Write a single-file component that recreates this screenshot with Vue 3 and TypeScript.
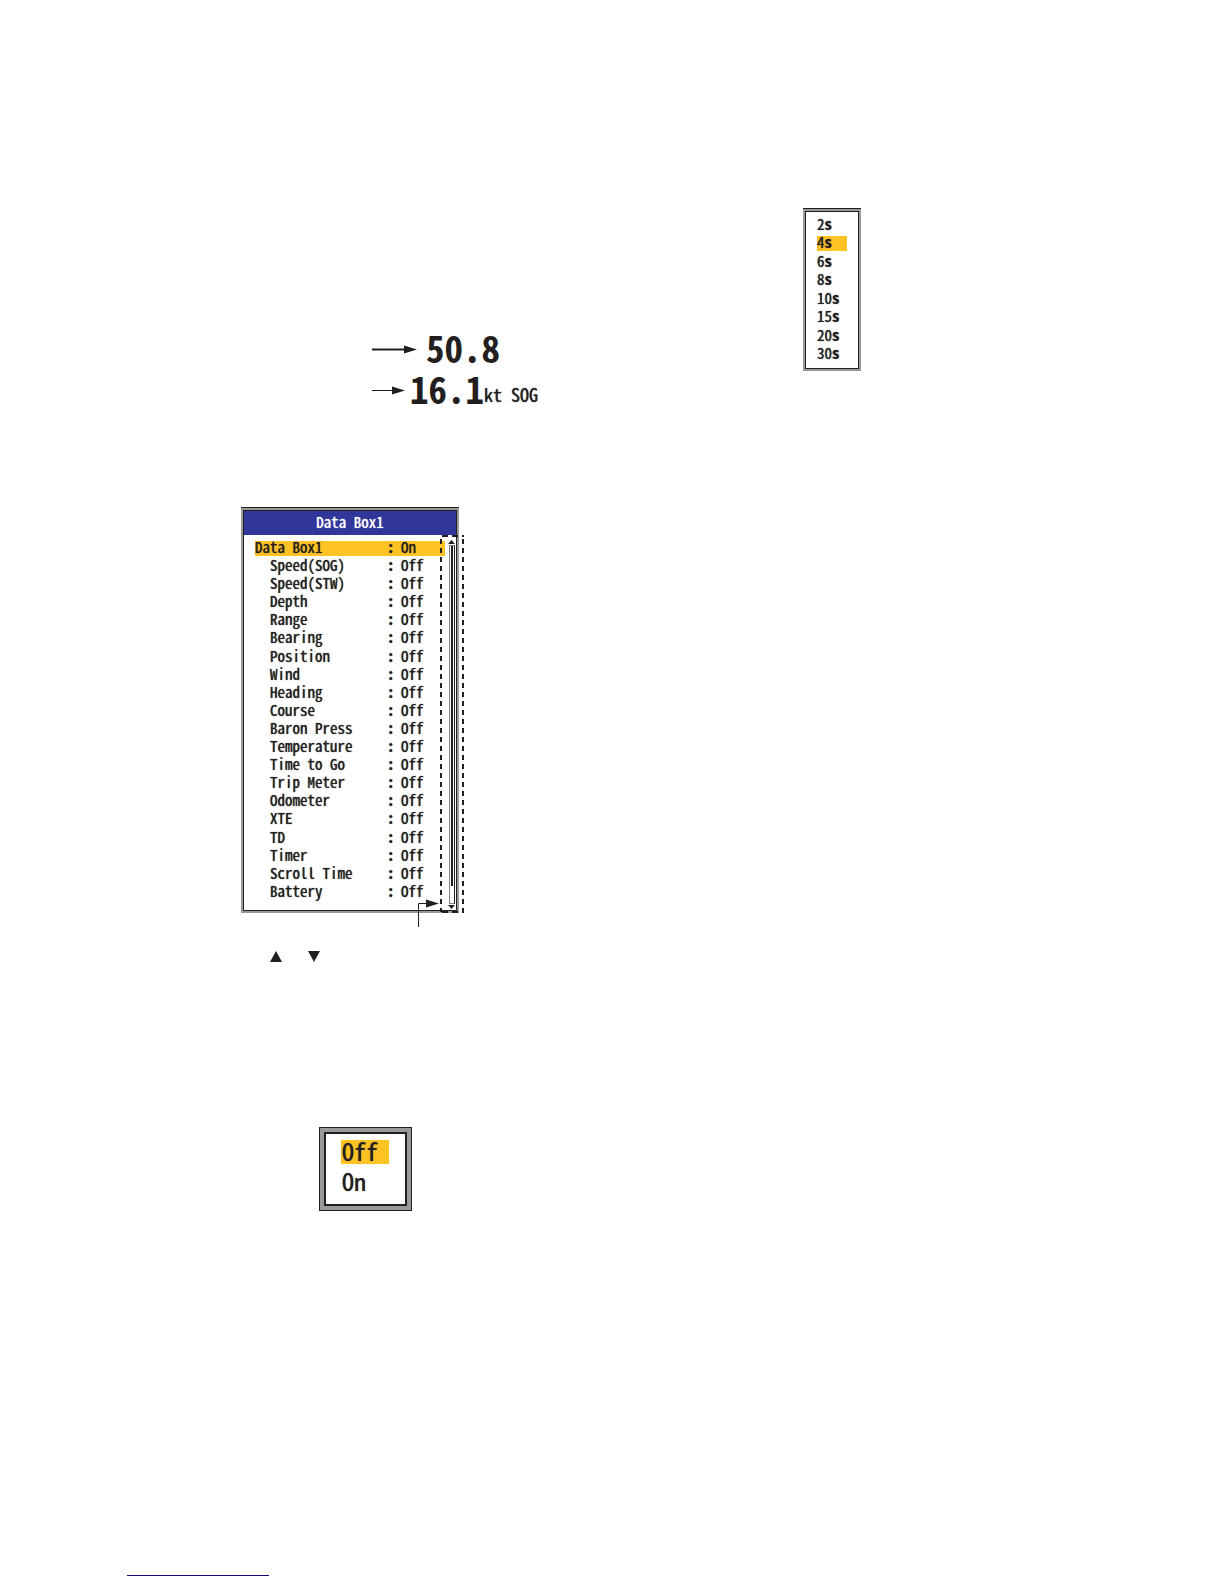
<script setup lang="ts">
import { ref } from 'vue'

interface Item {
  label: string
  value: string
}

const intervals: string[] = ['2s', '4s', '6s', '8s', '10s', '15s', '20s', '30s']
const chosenInterval = ref('4s')

const names: string[] = [
  'Speed(SOG)', 'Speed(STW)', 'Depth', 'Range', 'Bearing', 'Position', 'Wind',
  'Heading', 'Course', 'Baron Press', 'Temperature', 'Time to Go', 'Trip Meter',
  'Odometer', 'XTE', 'TD', 'Timer', 'Scroll Time', 'Battery',
]
const items: Item[] = [
  { label: 'Data Box1', value: 'On' },
  ...names.map((label) => ({ label, value: 'Off' })),
]
const chosenItem = ref('Data Box1')

const states: string[] = ['Off', 'On']
const chosenState = ref('Off')
</script>

<template>
  <main class="page">
    <div class="columns">
      <section class="left">
        <div class="readout">
          <div class="reading">
            <svg class="arrow" width="45" height="9" viewBox="0 0 45 9" aria-hidden="true">
              <path d="M0 4.5H34" stroke="#231f20" stroke-width="2" />
              <path d="M32 0.5L45 4.5L32 8.5Z" fill="#231f20" />
            </svg>
            <span class="big">50.8</span>
          </div>
          <div class="reading near">
            <svg class="arrow" width="33" height="9" viewBox="0 0 33 9" aria-hidden="true">
              <path d="M0 4.5H22" stroke="#231f20" />
              <path d="M20 0.5L33 4.5L20 8.5Z" fill="#231f20" />
            </svg>
            <span class="big">16.1</span><span class="unit">kt SOG</span>
          </div>
        </div>

        <div class="panel frame">
          <h2 class="title">Data Box1</h2>
          <div class="body">
            <ul class="items">
              <li v-for="item in items" :key="item.label">
                <button
                  type="button"
                  class="item"
                  :class="{ chosen: item.label === chosenItem, sub: item.label !== 'Data Box1' }"
                  @click="chosenItem = item.label"
                >
                  <span class="name">{{ item.label }}</span>
                  <span class="colon">:</span>
                  <span>{{ item.value }}</span>
                </button>
              </li>
            </ul>
            <div class="scroll">
              <svg width="7" height="4" viewBox="0 0 7 4" aria-hidden="true"><path d="M0 4L3.5 0L7 4Z" fill="#231f20" /></svg>
              <div class="track"><div class="thumb"></div></div>
              <svg width="7" height="4" viewBox="0 0 7 4" aria-hidden="true"><path d="M0 0L3.5 4L7 0Z" fill="#231f20" /></svg>
            </div>
          </div>
          <svg class="outline" width="24" height="378" viewBox="0 0 24 378" aria-hidden="true">
            <path d="M2 1H24M2 377H24" fill="none" stroke="#231f20" stroke-width="2" stroke-dasharray="6 4" />
            <path d="M1 4V377M23 4V377" fill="none" stroke="#231f20" stroke-width="2" stroke-dasharray="5 4" />
          </svg>
          <svg class="pointer" width="21" height="28" viewBox="0 0 21 28" aria-hidden="true">
            <path d="M0.5 28V4.5H10" fill="none" stroke="#231f20" />
            <path d="M8 0.5L21 4.5L8 8.5Z" fill="#231f20" />
          </svg>
        </div>

        <div class="keys">
          <svg width="12" height="11" viewBox="0 0 12 11" aria-hidden="true"><path d="M0 11L6 0L12 11Z" fill="#231f20" /></svg>
          <svg width="12" height="11" viewBox="0 0 12 11" aria-hidden="true"><path d="M0 0L6 11L12 0Z" fill="#231f20" /></svg>
        </div>

        <ul class="states">
          <li v-for="state in states" :key="state">
            <button type="button" class="state" :class="{ chosen: state === chosenState }" @click="chosenState = state">{{ state }}</button>
          </li>
        </ul>
      </section>

      <section class="right">
        <ul class="intervals frame">
          <li v-for="interval in intervals" :key="interval">
            <button
              type="button"
              class="interval"
              :class="{ chosen: interval === chosenInterval }"
              @click="chosenInterval = interval"
            >{{ interval.slice(0, -1) }}<b>s</b></button>
          </li>
        </ul>
      </section>
    </div>
    <div class="rule"></div>
  </main>
</template>

<style>
body {
  margin: 0;
  background: #fff;
}
</style>

<style scoped>
.page {
  box-sizing: border-box;
  min-height: 100vh;
  padding-bottom: 8px;
  display: flex;
  flex-direction: column;
  justify-content: space-between;
  color: #231f20;
  font-family: "Noto Sans Mono CJK JP", "Liberation Mono", monospace;
  font-size: 15px;
  line-height: 12px;
  text-shadow: 0 0 1px currentColor;
}
.columns {
  display: grid;
  grid-template-columns: 1fr 1fr;
  align-items: start;
}
ul {
  margin: 0;
  padding: 0;
  list-style: none;
}
li {
  display: flex;
}
button {
  display: block;
  margin: 0;
  padding: 0 0 3px;
  border: 0;
  background: none;
  color: inherit;
  font: inherit;
  text-align: left;
  text-shadow: inherit;
  white-space: pre;
}
.chosen {
  background: #ffc424;
}
.frame {
  box-sizing: border-box;
  border: 2px solid #98999b;
  box-shadow: inset 0 0 0 1px #231f20, 0 -1px 0 #231f20;
}
.left {
  padding-top: 329px;
}
.readout {
  margin-left: 372px;
}
.reading {
  display: flex;
  align-items: center;
  gap: 9px;
  height: 41px;
}
.near {
  gap: 5px;
}
.big {
  padding-bottom: 5px;
  font-size: 37px;
  line-height: 36px;
  font-weight: 700;
  text-shadow: none;
}
.unit {
  margin-left: -5px;
  align-self: flex-end;
  padding-bottom: 2px;
  font-size: 18px;
  line-height: 30px;
}
.panel {
  position: relative;
  width: 218px;
  margin: 97px 0 0 241px;
  padding: 1px;
}
.title {
  margin: 0;
  padding-bottom: 2px;
  background: #30369a;
  color: #fff;
  font-size: 15px;
  font-weight: 400;
  line-height: 22px;
  text-align: center;
}
.body {
  display: flex;
  justify-content: space-between;
  padding: 6px 1px 10px 11px;
}
.items {
  display: flex;
  flex-direction: column;
  justify-content: space-between;
  width: 190px;
  height: 359px;
}
.item {
  display: flex;
  width: 100%;
}
.name {
  flex: none;
  width: 132px;
}
.sub .name {
  box-sizing: border-box;
  padding-left: 15px;
}
.colon {
  flex: none;
  width: 14px;
  font-weight: 700;
}
.scroll {
  display: flex;
  flex-direction: column;
  align-items: center;
  gap: 1px;
  height: 369px;
  margin: -1px 0 -9px;
}
.track {
  box-sizing: border-box;
  flex: 1;
  width: 6px;
  border: 1px solid #808285;
  border-right-color: #231f20;
}
.thumb {
  width: 2px;
  height: 340px;
  margin: 0 1px;
  background: #231f20;
}
.outline {
  position: absolute;
  left: 197px;
  top: 25px;
}
.pointer {
  position: absolute;
  left: 175px;
  top: 389px;
}
.keys {
  display: flex;
  gap: 26px;
  margin: 38px 0 0 270px;
}
.states {
  box-sizing: border-box;
  width: 93px;
  margin: 165px 0 0 319px;
  padding: 8px 16px 12px 17px;
  display: flex;
  flex-direction: column;
  gap: 6px;
  border: 5px solid #98999b;
  outline: 1px solid #231f20;
  outline-offset: -1px;
  box-shadow: inset 0 0 0 2px #231f20;
  font-size: 24px;
}
.state {
  width: 48px;
  padding: 0 0 2px 1px;
  line-height: 22px;
}
.right {
  padding-top: 209px;
}
.intervals {
  display: flex;
  flex-direction: column;
  justify-content: space-between;
  width: 58px;
  height: 162px;
  margin-left: 191px;
  padding: 7px 12px;
}
.interval {
  width: 30px;
}
.rule {
  width: 142px;
  height: 1px;
  margin-left: 127px;
  background: #10107c;
}
</style>
